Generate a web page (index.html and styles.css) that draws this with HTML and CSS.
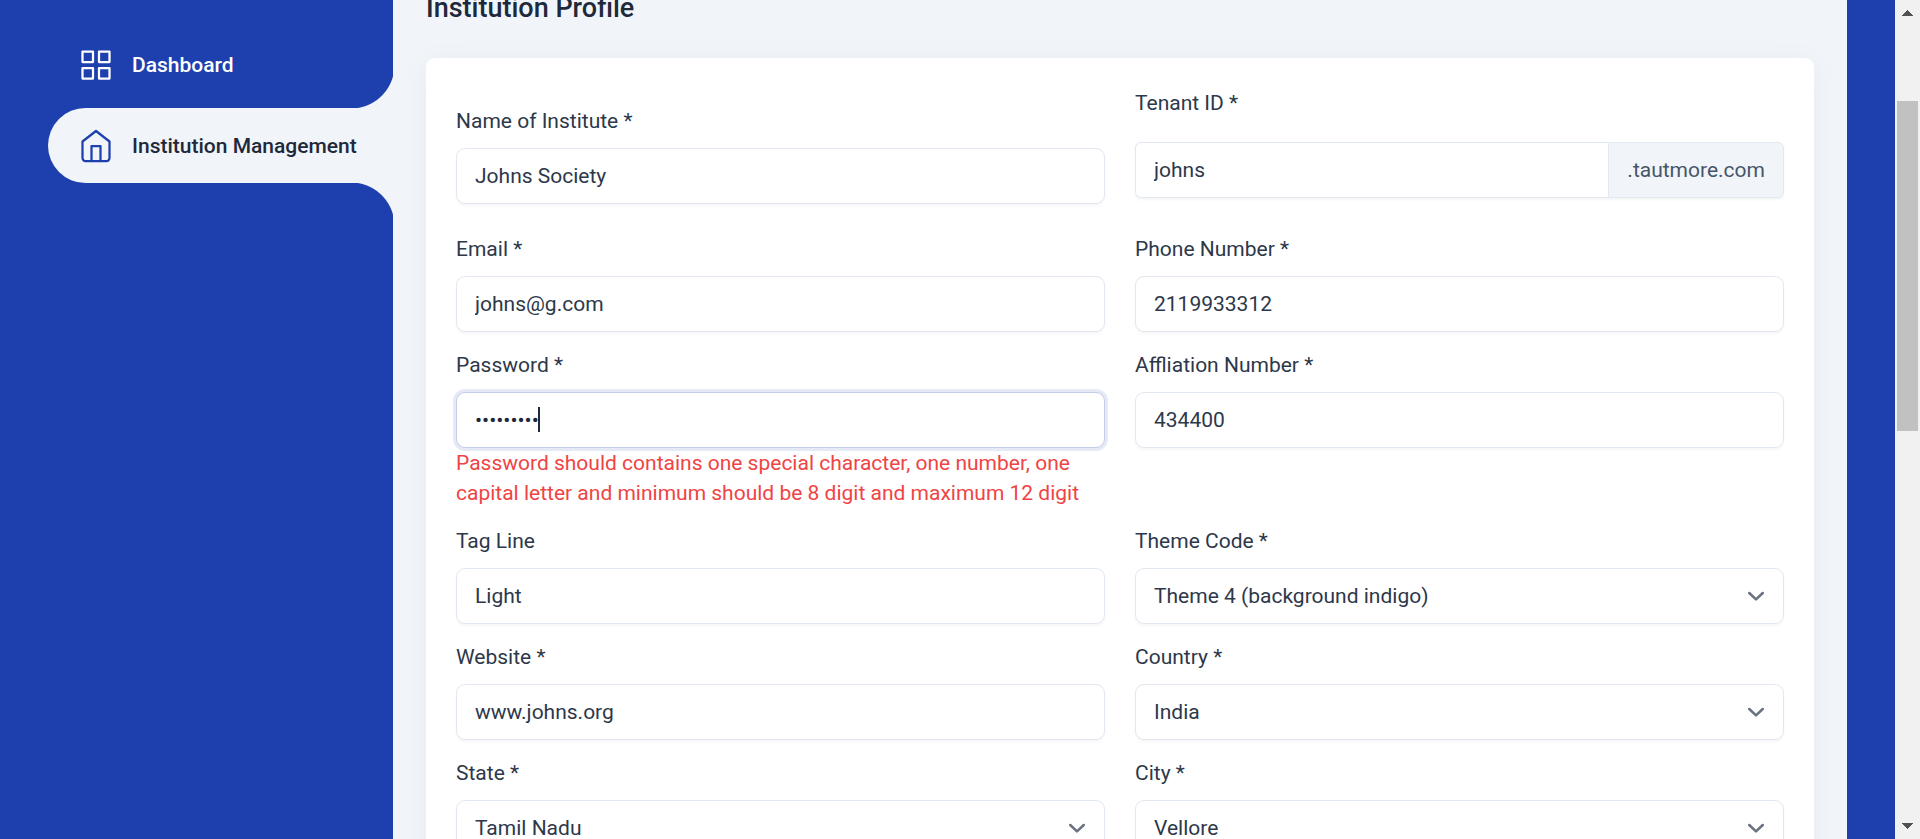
FILE: index.html
```html
<!DOCTYPE html>
<html lang="en">
<head>
<meta charset="utf-8">
<title>Institution Profile</title>
<link rel="stylesheet" href="styles.css">
</head>
<body>
<div class="app">
  <nav class="sidebar" aria-label="Main">
    <a class="nav-item" href="#dashboard">
      <svg class="nav-icon" viewBox="0 0 24 24" aria-hidden="true"><rect x="3" y="3" width="7" height="7"/><rect x="14" y="3" width="7" height="7"/><rect x="14" y="14" width="7" height="7"/><rect x="3" y="14" width="7" height="7"/></svg>
      <span>Dashboard</span>
    </a>
    <a class="nav-item nav-item-active" href="#institution" aria-current="page">
      <svg class="nav-icon" viewBox="0 0 24 24" aria-hidden="true"><path d="M3 9l9-7 9 7v11a2 2 0 0 1-2 2H5a2 2 0 0 1-2-2z"/><path d="M9 22V12h6v10"/></svg>
      <span>Institution Management</span>
    </a>
  </nav>

  <main class="content">
    <h1 class="title">Institution Profile</h1>
    <form class="card">
      <div class="field">
        <label class="label" for="name">Name of Institute *</label>
        <input class="control" id="name" type="text" value="Johns Society">
      </div>
      <div class="field field-tenant">
        <label class="label" for="tenant">Tenant ID *</label>
        <div class="group">
          <input class="control" id="tenant" type="text" value="johns">
          <span class="addon">.tautmore.com</span>
        </div>
      </div>
      <div class="field">
        <label class="label" for="email">Email *</label>
        <input class="control" id="email" type="email" value="johns@g.com">
      </div>
      <div class="field">
        <label class="label" for="phone">Phone Number *</label>
        <input class="control" id="phone" type="tel" value="2119933312">
      </div>
      <div class="field">
        <label class="label" for="password">Password *</label>
        <div class="control-wrap">
          <input class="control control-focus" id="password" type="password" value="Johns1234" aria-describedby="password-error">
          <span class="caret"></span>
        </div>
        <p class="error" id="password-error">Password should contains one special character, one number, one capital letter and minimum should be 8 digit and maximum 12 digit</p>
      </div>
      <div class="field">
        <label class="label" for="affiliation">Affliation Number *</label>
        <input class="control" id="affiliation" type="text" value="434400">
      </div>
      <div class="field">
        <label class="label" for="tagline">Tag Line</label>
        <input class="control" id="tagline" type="text" value="Light">
      </div>
      <div class="field">
        <label class="label" for="theme">Theme Code *</label>
        <div class="control-wrap">
          <select class="control" id="theme"><option>Theme 4 (background indigo)</option></select>
          <svg class="chevron" viewBox="0 0 20 20" aria-hidden="true"><path d="M5.500 8l4.500 4.300L14.500 8"/></svg>
        </div>
      </div>
      <div class="field">
        <label class="label" for="website">Website *</label>
        <input class="control" id="website" type="text" value="www.johns.org">
      </div>
      <div class="field">
        <label class="label" for="country">Country *</label>
        <div class="control-wrap">
          <select class="control" id="country"><option>India</option></select>
          <svg class="chevron" viewBox="0 0 20 20" aria-hidden="true"><path d="M5.500 8l4.500 4.300L14.500 8"/></svg>
        </div>
      </div>
      <div class="field">
        <label class="label" for="state">State *</label>
        <div class="control-wrap">
          <select class="control" id="state"><option>Tamil Nadu</option></select>
          <svg class="chevron" viewBox="0 0 20 20" aria-hidden="true"><path d="M5.500 8l4.500 4.300L14.500 8"/></svg>
        </div>
      </div>
      <div class="field">
        <label class="label" for="city">City *</label>
        <div class="control-wrap">
          <select class="control" id="city"><option>Vellore</option></select>
          <svg class="chevron" viewBox="0 0 20 20" aria-hidden="true"><path d="M5.500 8l4.500 4.300L14.500 8"/></svg>
        </div>
      </div>
    </form>
  </main>

  <div class="scrollbar" aria-hidden="true">
    <svg class="arrow" viewBox="0 0 25 25" shape-rendering="crispEdges"><path d="M12.500 10l6 6h-12z"/></svg>
    <div class="track"><div class="thumb"></div></div>
    <svg class="arrow" viewBox="0 0 25 25" shape-rendering="crispEdges"><path d="M12.500 15l6-6h-12z"/></svg>
  </div>
</div>
</body>
</html>
```
FILE: styles.css
```css
:root {
  --brand: #1e40af;
  --surface: #f1f5f9;
  --ink: #1e293b;
  --ink-soft: #2d384a;
  --line: #e2e8f0;
}

* {
  box-sizing: border-box;
}

body {
  margin: 0;
  font: 400 21px/30px Roboto, sans-serif;
  color: var(--ink);
  background: var(--brand);
}

.app {
  display: flex;
  height: 100vh;
  overflow: hidden;
}

.sidebar {
  flex: none;
  display: flex;
  flex-direction: column;
  gap: 6px;
  width: 393px;
  padding: 27px 0 0 48px;
}

.nav-item {
  position: relative;
  display: flex;
  align-items: center;
  gap: 18px;
  height: 75px;
  padding-left: 30px;
  border-radius: 38px 0 0 38px;
  color: #fff;
  font-weight: 500;
  text-decoration: none;
  white-space: nowrap;
}

.nav-icon {
  flex: none;
  width: 36px;
  height: 36px;
  fill: none;
  stroke: currentColor;
  stroke-width: 1.5;
  stroke-linecap: round;
  stroke-linejoin: round;
}

.nav-item-active {
  background: var(--surface);
  color: var(--ink);
}

.nav-item-active .nav-icon {
  color: var(--brand);
}

/* Concave corners joining the active item to the content panel */
.nav-item-active::before,
.nav-item-active::after {
  content: "";
  position: absolute;
  right: 0;
  width: 42px;
  height: 43px;
}

.nav-item-active::before {
  bottom: 100%;
  background: radial-gradient(circle at 0 0, transparent 43px, var(--surface) 44px);
}

.nav-item-active::after {
  top: 100%;
  background: radial-gradient(circle at 0 100%, transparent 43px, var(--surface) 44px);
}

.content {
  flex: 1;
  min-width: 0;
  margin-right: 48px;
  padding: 0 33px;
  background: var(--surface);
}

.title {
  margin: -10px 0 32px;
  font-size: 27px;
  line-height: 36px;
  font-weight: 500;
}

.card {
  display: grid;
  grid-template-columns: repeat(2, minmax(0, 1fr));
  column-gap: 30px;
  padding: 30px;
  border-radius: 9px;
  background: #fff;
  box-shadow: 0 4px 30px rgba(0, 0, 0, 0.043);
  color: var(--ink-soft);
}

.field {
  margin-top: 18px;
}

.field-tenant {
  margin: 0 0 18px;
}

.label {
  display: block;
  margin-bottom: 12px;
}

.field-tenant .label {
  margin-bottom: 24px;
}

.control {
  display: block;
  width: 100%;
  height: 56px;
  margin: 0;
  padding: 0 18px;
  border: 1px solid var(--line);
  border-radius: 9px;
  background: #fff;
  box-shadow: 0 2px 3px rgba(0, 0, 0, 0.04);
  color: inherit;
  font: inherit;
  appearance: none;
  outline: none;
}

.control-wrap {
  position: relative;
}

.control-focus {
  border-color: #c3cce9;
  box-shadow: 0 0 0 3px #e6eaf6;
  color: var(--ink);
}

.caret {
  position: absolute;
  top: 15px;
  left: 82px;
  width: 2px;
  height: 25px;
  background: var(--ink);
}

.chevron {
  position: absolute;
  top: 13px;
  right: 13px;
  width: 30px;
  height: 30px;
  fill: none;
  stroke: #6b7280;
  stroke-width: 1.7;
  stroke-linecap: round;
  stroke-linejoin: round;
  pointer-events: none;
}

.group {
  display: flex;
  border-radius: 6px;
  box-shadow: 0 2px 3px rgba(0, 0, 0, 0.04);
}

.group .control {
  flex: 1;
  min-width: 0;
  border-right: 0;
  border-radius: 6px 0 0 6px;
  box-shadow: none;
}

.addon {
  flex: none;
  padding: 12px 18px;
  border: 1px solid var(--line);
  border-radius: 0 6px 6px 0;
  background: var(--surface);
  color: #475569;
}

.error {
  margin: 0;
  color: #ef4444;
}

.scrollbar {
  flex: none;
  display: flex;
  flex-direction: column;
  width: 25px;
  background: #f1f1f1;
}

.arrow {
  flex: none;
  width: 25px;
  height: 25px;
  fill: #505050;
}

.track {
  display: grid;
  flex: 1;
  grid-template-rows: 76fr 330fr 383fr;
  padding: 0 2px;
}

.thumb {
  grid-row: 2;
  background: #c1c1c1;
}
```
